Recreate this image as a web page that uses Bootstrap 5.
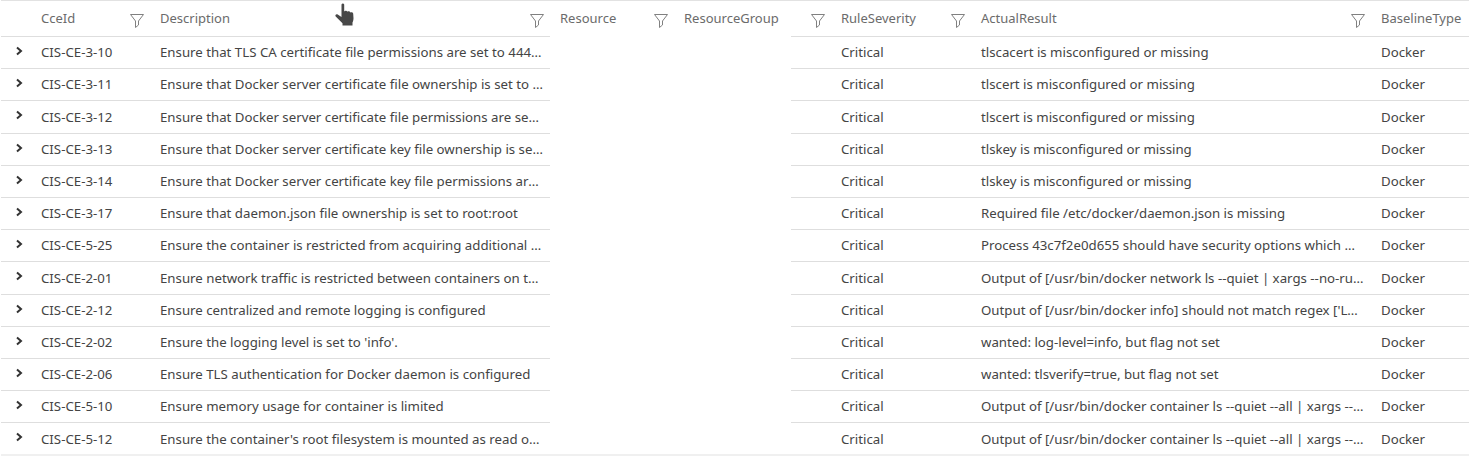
<!doctype html>
<html lang="en">
<head>
<meta charset="utf-8">
<title>Baseline results</title>
<link rel="stylesheet" href="https://cdn.jsdelivr.net/npm/bootstrap@5.3.0/dist/css/bootstrap.min.css">
<style>
html,body{background:#fff;overflow:hidden;height:456px}
.grid-wrap{margin-left:1px;height:454px;overflow:hidden;border-top:1px solid #e2e2e2}
.grid-foot{margin-left:1px;height:2px;background:#f0f0f0}
.res-table{table-layout:fixed;width:1468px;margin:0;border-collapse:separate;border-spacing:0;font:13px/18px "Noto Sans",sans-serif;color:#444}
.res-table th{font-weight:400;color:#6b6b6b;height:36px;padding:0 0 1px 8px;border-bottom:1px solid #dedede;position:relative;white-space:nowrap;vertical-align:middle}
.res-table th.gap-head{border-bottom-color:transparent;padding-left:10px}
.res-table th.tail-head{padding:0}
.res-table td{height:32.2px;padding:0 7px .65px 8px;border-bottom:1px solid #dedede;vertical-align:middle;white-space:nowrap;overflow:hidden;text-overflow:ellipsis;color:#444;font-size:13.25px}
.res-table td.wide-end{padding-right:8px}
.res-table td.gap-cell{border-bottom-color:transparent}
.res-table td.sev-cell{padding-left:50px}
.res-table td.exp-cell{padding:0 0 3px 14px;overflow:visible}
.funnel{position:absolute;top:13px;right:8px;width:14px;height:14px;fill:none;stroke:#808080;stroke-width:1}
.res-table th.gap-head .funnel,.res-table th.desc-head .funnel{right:6px}
.res-table th.rg-head .funnel{right:8px}
.chev{display:block;width:9px;height:10px;fill:none;stroke:#333;stroke-width:2}
.hand{position:absolute;left:333px;top:3px;width:24px;height:24px;fill:#484848}
</style>
</head>
<body>
<div class="grid-wrap">
<table class="res-table">
<colgroup><col style="width:32px"><col style="width:119px"><col style="width:398px"><col style="width:124px"><col style="width:117px"><col style="width:42px"><col style="width:140px"><col style="width:400px"><col style="width:96px"></colgroup>
<thead><tr>
<th></th>
<th>CceId<svg class="funnel" viewBox="0 0 14 14"><path d="M.5 .5h13L8.500 7v4L5.500 13.500V7z"/></svg></th>
<th class="desc-head">Description<svg class="funnel" viewBox="0 0 14 14"><path d="M.5 .5h13L8.500 7v4L5.500 13.500V7z"/></svg></th>
<th class="gap-head">Resource<svg class="funnel" viewBox="0 0 14 14"><path d="M.5 .5h13L8.500 7v4L5.500 13.500V7z"/></svg></th>
<th class="gap-head">ResourceGroup</th>
<th class="tail-head rg-head"><svg class="funnel" viewBox="0 0 14 14"><path d="M.5 .5h13L8.500 7v4L5.500 13.500V7z"/></svg></th>
<th>RuleSeverity<svg class="funnel" viewBox="0 0 14 14"><path d="M.5 .5h13L8.500 7v4L5.500 13.500V7z"/></svg></th>
<th>ActualResult<svg class="funnel" viewBox="0 0 14 14"><path d="M.5 .5h13L8.500 7v4L5.500 13.500V7z"/></svg></th>
<th>BaselineType</th>
</tr></thead>
<tbody>
<tr><td class="exp-cell"><svg class="chev" viewBox="0 0 9 10"><path d="M2 1.5 6 5 2 8.5"/></svg></td><td>CIS-CE-3-10</td><td>Ensure that TLS CA certificate file permissions are set to 444 or more restrictively</td><td class="gap-cell" colspan="2"></td><td class="sev-cell" colspan="2">Critical</td><td class="wide-end">tlscacert is misconfigured or missing</td><td>Docker</td></tr>
<tr><td class="exp-cell"><svg class="chev" viewBox="0 0 9 10"><path d="M2 1.5 6 5 2 8.5"/></svg></td><td>CIS-CE-3-11</td><td>Ensure that Docker server certificate file ownership is set to root:root</td><td class="gap-cell" colspan="2"></td><td class="sev-cell" colspan="2">Critical</td><td class="wide-end">tlscert is misconfigured or missing</td><td>Docker</td></tr>
<tr><td class="exp-cell"><svg class="chev" viewBox="0 0 9 10"><path d="M2 1.5 6 5 2 8.5"/></svg></td><td>CIS-CE-3-12</td><td>Ensure that Docker server certificate file permissions are set to 444 or more restrictively</td><td class="gap-cell" colspan="2"></td><td class="sev-cell" colspan="2">Critical</td><td class="wide-end">tlscert is misconfigured or missing</td><td>Docker</td></tr>
<tr><td class="exp-cell"><svg class="chev" viewBox="0 0 9 10"><path d="M2 1.5 6 5 2 8.5"/></svg></td><td>CIS-CE-3-13</td><td>Ensure that Docker server certificate key file ownership is set to root:root</td><td class="gap-cell" colspan="2"></td><td class="sev-cell" colspan="2">Critical</td><td class="wide-end">tlskey is misconfigured or missing</td><td>Docker</td></tr>
<tr><td class="exp-cell"><svg class="chev" viewBox="0 0 9 10"><path d="M2 1.5 6 5 2 8.5"/></svg></td><td>CIS-CE-3-14</td><td>Ensure that Docker server certificate key file permissions are set to 400</td><td class="gap-cell" colspan="2"></td><td class="sev-cell" colspan="2">Critical</td><td class="wide-end">tlskey is misconfigured or missing</td><td>Docker</td></tr>
<tr><td class="exp-cell"><svg class="chev" viewBox="0 0 9 10"><path d="M2 1.5 6 5 2 8.5"/></svg></td><td>CIS-CE-3-17</td><td>Ensure that daemon.json file ownership is set to root:root</td><td class="gap-cell" colspan="2"></td><td class="sev-cell" colspan="2">Critical</td><td class="wide-end">Required file /etc/docker/daemon.json is missing</td><td>Docker</td></tr>
<tr><td class="exp-cell"><svg class="chev" viewBox="0 0 9 10"><path d="M2 1.5 6 5 2 8.5"/></svg></td><td>CIS-CE-5-25</td><td>Ensure the container is restricted from acquiring additional privileges</td><td class="gap-cell" colspan="2"></td><td class="sev-cell" colspan="2">Critical</td><td class="wide-end">Process 43c7f2e0d655 should have security options which must include no-new-privileges</td><td>Docker</td></tr>
<tr><td class="exp-cell"><svg class="chev" viewBox="0 0 9 10"><path d="M2 1.5 6 5 2 8.5"/></svg></td><td>CIS-CE-2-01</td><td>Ensure network traffic is restricted between containers on the default bridge</td><td class="gap-cell" colspan="2"></td><td class="sev-cell" colspan="2">Critical</td><td class="wide-end">Output of [/usr/bin/docker network ls --quiet | xargs --no-run-if-empty</td><td>Docker</td></tr>
<tr><td class="exp-cell"><svg class="chev" viewBox="0 0 9 10"><path d="M2 1.5 6 5 2 8.5"/></svg></td><td>CIS-CE-2-12</td><td>Ensure centralized and remote logging is configured</td><td class="gap-cell" colspan="2"></td><td class="sev-cell" colspan="2">Critical</td><td class="wide-end">Output of [/usr/bin/docker info] should not match regex ['Logging Driver: json-file']</td><td>Docker</td></tr>
<tr><td class="exp-cell"><svg class="chev" viewBox="0 0 9 10"><path d="M2 1.5 6 5 2 8.5"/></svg></td><td>CIS-CE-2-02</td><td>Ensure the logging level is set to 'info'.</td><td class="gap-cell" colspan="2"></td><td class="sev-cell" colspan="2">Critical</td><td class="wide-end">wanted: log-level=info, but flag not set</td><td>Docker</td></tr>
<tr><td class="exp-cell"><svg class="chev" viewBox="0 0 9 10"><path d="M2 1.5 6 5 2 8.5"/></svg></td><td>CIS-CE-2-06</td><td>Ensure TLS authentication for Docker daemon is configured</td><td class="gap-cell" colspan="2"></td><td class="sev-cell" colspan="2">Critical</td><td class="wide-end">wanted: tlsverify=true, but flag not set</td><td>Docker</td></tr>
<tr><td class="exp-cell"><svg class="chev" viewBox="0 0 9 10"><path d="M2 1.5 6 5 2 8.5"/></svg></td><td>CIS-CE-5-10</td><td>Ensure memory usage for container is limited</td><td class="gap-cell" colspan="2"></td><td class="sev-cell" colspan="2">Critical</td><td class="wide-end">Output of [/usr/bin/docker container ls --quiet --all | xargs --no-run-if-empty</td><td>Docker</td></tr>
<tr><td class="exp-cell"><svg class="chev" viewBox="0 0 9 10"><path d="M2 1.5 6 5 2 8.5"/></svg></td><td>CIS-CE-5-12</td><td>Ensure the container's root filesystem is mounted as read only</td><td class="gap-cell" colspan="2"></td><td class="sev-cell" colspan="2">Critical</td><td class="wide-end">Output of [/usr/bin/docker container ls --quiet --all | xargs --no-run-if-empty</td><td>Docker</td></tr>
</tbody>
</table>
</div>
<div class="grid-foot"></div>
<svg class="hand" viewBox="0 0 24 24" aria-hidden="true"><path d="M8.500 1.500c.3-1.200 2.400-1.200 2.700 0V8.500c.6-.9 2.700-.9 3 .3.6-.7 2.700-.6 3 .7.8-.5 2.800-.3 3 1.200l.3 4.500c0 2-.5 3.200-1 4.300V22.500H9.500v-2.300L2.700 13.500c-1-1.400.6-2.800 2-1.900L8.500 14z"/></svg>
</body>
</html>
